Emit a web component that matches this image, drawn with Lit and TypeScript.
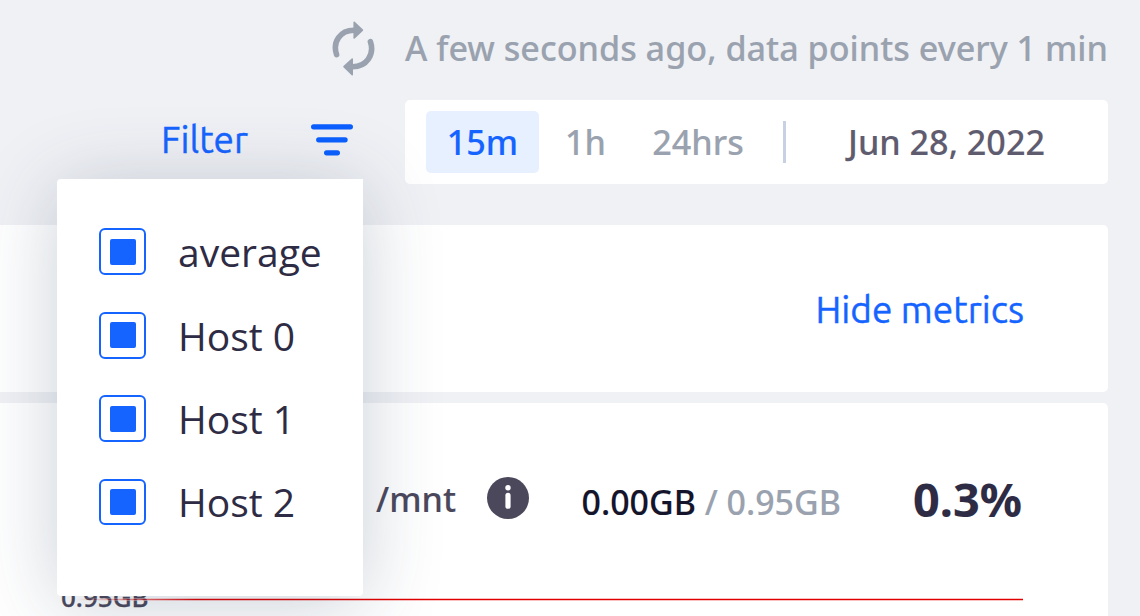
import { LitElement, html, css } from "lit";
import { customElement, state } from "lit/decorators.js";
import { classMap } from "lit/directives/class-map.js";

const refreshIcon = html`<svg class="refresh" width="44" height="56" viewBox="0 0 44 56">
  <g fill="none" stroke="#99a2ae" stroke-width="5.6" stroke-linecap="round">
    <path d="M5.6 33.6C1.2 20.6 9.4 9.2 23 9.2" />
    <path d="M39.4 20.6C43.8 33.8 35.4 45.8 21.6 45.8" />
  </g>
  <g fill="#99a2ae" stroke="#99a2ae" stroke-width="1.6" stroke-linejoin="round">
    <path d="M23.2 1.3 31.4 9.2 23.2 17Z" />
    <path d="M21.2 38 13 45.6 21.2 53.6Z" />
  </g>
</svg>`;

const filterIcon = html`<svg class="lines" width="42" height="32" viewBox="0 0 42 32">
  <g fill="none" stroke="#0b5fff" stroke-width="5.2" stroke-linecap="round">
    <path d="M2.6 2.8H39.4M7.7 15.8H34.1M15.6 28.8H26.4" />
  </g>
</svg>`;

const infoIcon = html`<svg class="info" width="42" height="42" viewBox="0 0 42 42">
  <circle cx="21" cy="21" r="21" fill="#4b485c" />
  <circle cx="21" cy="10.7" r="2.7" fill="#fff" />
  <path d="M21 18.4V29.2" stroke="#fff" stroke-width="5.2" stroke-linecap="round" />
</svg>`;

@customElement("app-root")
export class AppRoot extends LitElement {
  @state() private range = "15m";
  @state() private hosts = ["average", "Host 0", "Host 1", "Host 2"];

  static styles = css`
    :host {
      display: block;
      position: relative;
      width: 1140px;
      height: 616px;
      overflow: hidden;
      background: #f0f1f5;
      font-family: "Noto Sans", sans-serif;
      font-size: 34.15px;
      font-weight: 500;
      white-space: nowrap;
      -webkit-text-stroke-width: 0.12px;
    }
    * { box-sizing: border-box; }
    svg { display: block; flex: none; }
    .page { display: flex; flex-direction: column; height: 100%; padding-right: 32px; }
    .page > * { flex: none; }
    .status { display: flex; align-items: center; height: 100px; padding-left: 331px; color: #99a2ae; }
    .refresh { margin-top: -3px; }
    .ago { margin: -5px 0 0 30px; }
    .tools { display: flex; height: 84px; }
    .filter { display: flex; align-items: center; width: 405px; padding: 0 0 4px 161px; color: #1664ff; }
    .link { font-family: "Ubuntu", "Noto Sans", sans-serif; font-weight: 400; font-size: 37px; color: #1664ff; -webkit-text-stroke: 0.4px #1664ff; }
    .filter .link { width: 150px; margin-top: -2px; }
    .range { display: flex; align-items: center; flex: 1; background: #fff; border-radius: 5px; padding: 0 0 0 21px; color: #99a2ae; }
    .opt { display: flex; align-items: center; justify-content: center; height: 62px; padding-bottom: 2px; border-radius: 5px; }
    .o15m { width: 113px; }
    .o1h { width: 93px; }
    .o24hrs { width: 132px; }
    .on { background: #e6f0ff; color: #1664ff; }
    .rule { width: 3px; height: 42px; margin-left: 19px; background: #c8d0e4; }
    .date { margin: -2px 0 0 62px; color: #5f5c70; }
    .card { background: #fff; }
    .summary { display: flex; align-items: center; justify-content: flex-end; height: 167px; margin-top: 41px; padding: 1px 84px 0 0; border-radius: 0 5px 5px 0; }
    .disk { height: 220px; margin-top: 11px; border-radius: 0 5px 0 0; }
    .row { display: flex; align-items: center; height: 190px; padding-left: 376px; }
    .mnt { width: 111px; color: #4b485c; }
    .used { width: 331.5px; margin: 8px 0 0 52.5px; font-size: 33.95px; color: #14142b; }
    .total { color: #99a2ae; }
    .pct { margin-top: 1px; font-size: 46.8px; font-weight: 700; color: #2e2c44; }
    .axis { position: relative; height: 20px; }
    .tick { position: absolute; left: 61px; top: -14px; font-size: 26px; line-height: 36px; color: #4b485c; -webkit-text-stroke-width: 0.3px; }
    .limit { position: absolute; left: 61px; top: 5px; width: 962px; height: 3px; background: linear-gradient(#f9c0c0 33%, #e00000 33% 67%, #f9c0c0 67%); mask-image: linear-gradient(90deg, transparent 15px, #000 135px); }
    .menu { position: absolute; left: 57px; top: 179px; width: 306px; height: 417px; padding: 49px 0 0 42px; border-radius: 4px 0 4px 4px; background: #fff; box-shadow: 0 8px 80px rgba(34, 60, 88, 0.24); }
    .item { display: flex; align-items: center; height: 47px; margin-bottom: 36.5px; font-family: "Open Sans", sans-serif; font-weight: 400; font-size: 39px; color: #2e2c44; -webkit-text-stroke-width: 0; }
    .item:last-child, .item:last-child .box { height: 46px; }
    .box { display: flex; align-items: center; justify-content: center; width: 47px; height: 47px; margin-right: 32px; border: 2px solid #1664ff; border-radius: 6px; }
    .mark { width: 26px; height: 26px; border-radius: 2px; background: #1664ff; }
  `;

  render() {
    return html`
      <div class="page">
        <div class="status">${refreshIcon}<span class="ago">A few seconds ago, data points every 1 min</span></div>
        <div class="tools">
          <div class="filter"><span class="link">Filter</span>${filterIcon}</div>
          <div class="range">
            ${["15m", "1h", "24hrs"].map(
              (r) => html`<span class=${classMap({ opt: true, ["o" + r]: true, on: r === this.range })} @click=${() => (this.range = r)}>${r}</span>`
            )}
            <span class="rule"></span>
            <span class="date">Jun 28, 2022</span>
          </div>
        </div>
        <div class="card summary"><span class="link">Hide metrics</span></div>
        <div class="card disk">
          <div class="row">
            <span class="mnt">/mnt</span>${infoIcon}
            <span class="used">0.00GB<span class="total"> / 0.95GB</span></span>
            <span class="pct">0.3%</span>
          </div>
          <div class="axis"><span class="tick">0.95GB</span><span class="limit"></span></div>
        </div>
      </div>
      <div class="menu">
        ${this.hosts.map((h) => html`<div class="item"><span class="box"><span class="mark"></span></span><span class="name">${h}</span></div>`)}
      </div>
    `;
  }
}
